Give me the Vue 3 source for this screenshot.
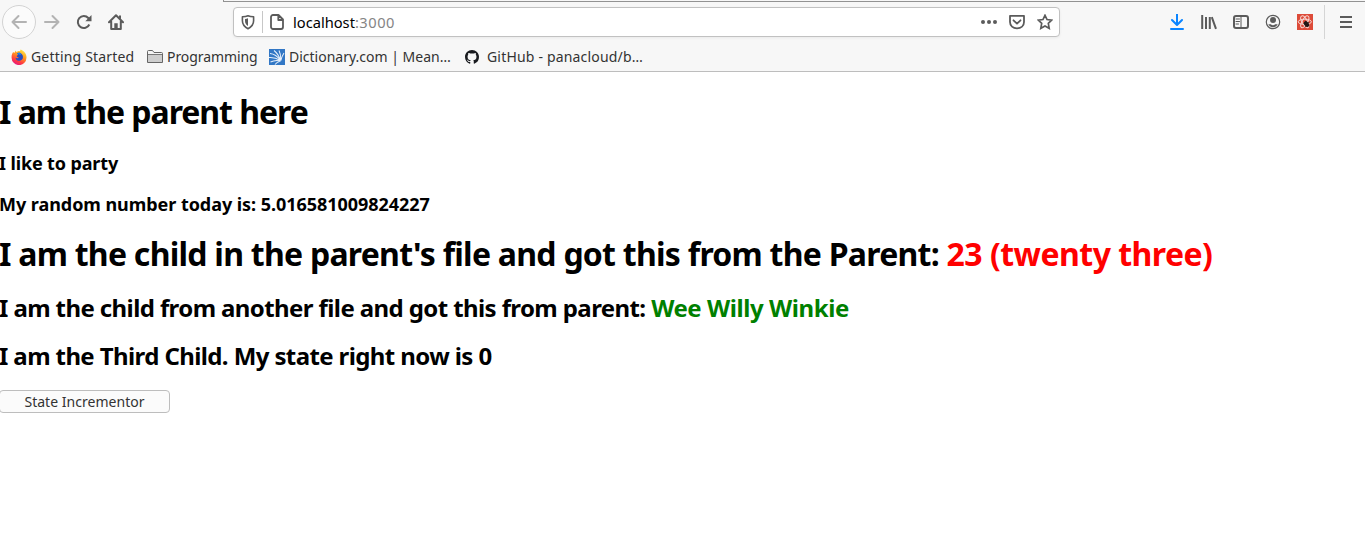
<script setup>
import { ref } from 'vue'

const count = ref(0)
const randomNumber = '5.016581009824227'
</script>

<template>
  <div class="window">
    <header class="chrome">
      <div class="tab-edge"></div>
      <div class="navbar">
        <div class="nav-buttons">
          <span class="back">
            <svg width="16" height="16" viewBox="0 0 16 16" class="line faded"><path d="M15 8H1.5M7.5 2 1.5 8l6 6" /></svg>
          </span>
          <svg width="16" height="16" viewBox="0 0 16 16" class="line faded fwd"><path d="M1 8h13.5M8.500 2l6 6-6 6" /></svg>
          <svg width="16" height="16" viewBox="0 0 16 16" class="line reload"><path d="M13.300 10.500A6 6 0 1 1 12.300 4L14 5.800" /><path class="solid" d="M15.500 1v6.200H9.300z" /></svg>
          <svg width="16" height="16" viewBox="0 0 16 16" class="line home"><path d="M1 8.300 8 1.300l7 7M3.200 7.500V15h9.600V7.500" /><path class="solid" d="M6.300 15V9.200h3.400V15zM11 1.500h2v4l-2-2z" /></svg>
        </div>
        <div class="urlbar">
          <svg width="14" height="16" viewBox="0 0 14 16" class="line shield"><path d="M7 1.800c-2 .9-3.800 1-5.600 1v4c0 4 1.800 6 5.600 8 3.800-2 5.600-4 5.600-8v-4c-1.800 0-3.600-.1-5.600-1z" /><path class="solid" d="M7 4.300v7.800c-2-1.300-3-2.800-3-5.300V5c1.100-.1 2-.3 3-.7z" /></svg>
          <i class="url-divider"></i>
          <svg width="14" height="16" viewBox="0 0 14 16" class="line page"><path d="M3 1h5.500L13 5.500V13a2 2 0 0 1-2 2H3a2 2 0 0 1-2-2V3a2 2 0 0 1 2-2zM8.300 1v5H13" /></svg>
          <span class="url">localhost<span class="port">:3000</span></span>
          <svg width="16" height="16" viewBox="0 0 16 16" class="dots"><circle cx="2" cy="8" r="2" /><circle cx="8" cy="8" r="2" /><circle cx="14" cy="8" r="2" /></svg>
          <svg width="16" height="16" viewBox="0 0 16 16" class="line pocket"><path d="M1 1.800h14V8c0 4-3 6.300-7 6.300S1 12 1 8z" /><path d="m4.500 6.300 3.500 3.300 3.500-3.300" /></svg>
          <svg width="16" height="16" viewBox="0 0 16 16" class="line star"><path d="m8 1.300 2.050 4.250 4.650.55-3.400 3.250.9 4.950L8 12l-4.200 2.300.9-4.950L1.300 6.100l4.650-.55z" /></svg>
        </div>
        <div class="tools">
          <svg width="14" height="16" viewBox="0 0 14 16" class="line download"><path d="M7 0v10.500M2 6l5 5 5-5M1 15h12" /></svg>
          <svg width="16" height="16" viewBox="0 0 16 16" class="line library"><path d="M1.200 1v14M5 3v12M8.800 3v12M10.800 3.200 15 14.800" /></svg>
          <svg width="16" height="16" viewBox="0 0 16 16" class="line sidebar"><rect x="1" y="2" width="14" height="12" rx="2" /><path class="thin" d="M8 2v12M3 5h3.500M3 7.500h3.500M3 10h2.500" /></svg>
          <svg width="16" height="16" viewBox="0 0 16 16" class="account"><circle cx="8" cy="8" r="6.700" fill="none" stroke="#5b5b5b" stroke-width="1.200" /><circle cx="8" cy="6" r="3" /><path d="M3.300 10.300h2.500c1.200 1.200 3.200 1.200 4.400 0h2.500C11.800 12.200 10 13.300 8 13.300s-3.800-1.100-4.700-3z" /></svg>
          <svg width="16" height="16" viewBox="0 0 16 16" class="react"><rect width="16" height="16" fill="#dd4b39" /><g fill="none" stroke="#f7d8d4" stroke-width="1"><ellipse cx="7.800" cy="7.800" rx="6.600" ry="2.600" /><ellipse cx="7.800" cy="7.800" rx="6.600" ry="2.600" transform="rotate(60 7.800 7.800)" /><ellipse cx="7.800" cy="7.800" rx="6.600" ry="2.600" transform="rotate(120 7.800 7.800)" /></g><ellipse cx="9.500" cy="10" rx="2.200" ry="3.200" transform="rotate(-35 9.500 10)" fill="#211817" /><path d="m6.500 9.500 6 2.500M8 13l4-5M8.500 7l2 6" stroke="#211817" stroke-width=".8" /></svg>
          <i class="tool-divider"></i>
          <svg width="12" height="16" viewBox="0 0 12 16" class="line menu"><path d="M0 3h12M0 8h12M0 13h12" /></svg>
        </div>
      </div>
      <nav class="bookmarks">
        <a class="bookmark b1">
          <svg width="16" height="16" viewBox="0 0 16 16">
            <defs><linearGradient id="fox" x1=".8" y1="0" x2=".3" y2="1"><stop offset="0" stop-color="#fff04a" /><stop offset=".4" stop-color="#ff9a1f" /><stop offset=".75" stop-color="#ff3b40" /><stop offset="1" stop-color="#e31587" /></linearGradient></defs>
            <path d="M2.200 3 3.300 4l1.500-2.400.7 1.700C6.500 2.200 8 1.900 9 2.200L9.500.500c3.500 1.300 6.300 4.400 6 8.300A7.400 7.400 0 0 1 .6 8.500C.5 6.300 1.200 4.300 2.200 3z" fill="url(#fox)" />
            <path d="M6 4.200c2.300-1.500 6 .3 6 3.800 0 2.700-2.200 4-4.200 3.800-2-.2-3.200-1.500-3.200-3 1.200.8 2.300.5 3.200-.4-1.200-.2-2-.6-2.200-1.500L7 5.800z" fill="#274cc0" />
            <path d="m6 4.200 2.500-.7c1.200.8 1.500 1.600 1.500 2.500L7.600 5.500z" fill="#1786ee" />
          </svg>
          <span>Getting Started</span>
        </a>
        <a class="bookmark b2">
          <svg width="16" height="16" viewBox="0 0 16 16"><path d="M.500 13.500v-11q0-1 1-1h4l1.500 2h7.500q1 0 1 1v9z" fill="#f4f4f4" stroke="#666" /><path d="M1 6h14v7H1z" fill="#cecece" /><path d="M1 5.500h14" stroke="#777" /></svg>
          <span>Programming</span>
        </a>
        <a class="bookmark b3">
          <svg width="16" height="16" viewBox="0 0 16 16"><path d="M0 0h16v16H0z" fill="#3277c5" /><path d="M1 4.500Q7 5 11.500 11.500M5 1.500q4.500 3.500 6.500 10M10 1.500q2 4 1.800 10M15 4q-2 3-3.200 7.500M0 8.500q6-.5 11.500 3M1.500 13q5-2.500 10-1M6 15.500q2-2.500 5.500-3.500" stroke="#e7f0fb" stroke-width="1.050" fill="none" /></svg>
          <span>Dictionary.com | Mean…</span>
        </a>
        <a class="bookmark b4">
          <svg width="14" height="14" viewBox="0 0 16 16"><path fill="#191b1f" fill-rule="evenodd" d="M8 0C3.580 0 0 3.580 0 8c0 3.540 2.290 6.530 5.470 7.590.4.070.55-.17.55-.38 0-.19-.01-.82-.01-1.490-2.010.37-2.530-.49-2.690-.94-.09-.23-.48-.94-.82-1.130-.28-.15-.68-.52-.01-.53.63-.01 1.080.58 1.230.82.72 1.210 1.870.87 2.330.66.070-.52.28-.87.51-1.070-1.780-.2-3.640-.89-3.640-3.950 0-.87.31-1.590.82-2.150-.08-.2-.36-1.020.08-2.120 0 0 .67-.21 2.200.82.64-.18 1.320-.27 2-.27s1.360.09 2 .27c1.530-1.040 2.200-.82 2.200-.82.44 1.100.16 1.920.08 2.120.51.56.82 1.270.82 2.150 0 3.070-1.870 3.750-3.650 3.950.29.25.54.73.54 1.480 0 1.070-.01 1.930-.01 2.200 0 .21.15.46.55.38A8.010 8.010 0 0 0 16 8c0-4.420-3.580-8-8-8z" /></svg>
          <span>GitHub - panacloud/b…</span>
        </a>
      </nav>
    </header>
    <main class="content">
      <h1 class="parent"><span>I am the parent here</span></h1>
      <h3 class="party"><span>I like to party</span></h3>
      <h3 class="random"><span>My random number today is: {{ randomNumber }}</span></h3>
      <h1 class="child"><span>I am the child in the parent's file and got this from the Parent: </span><span class="red">23 (twenty three)</span></h1>
      <h2 class="other"><span>I am the child from another file and got this from parent: </span><span class="green">Wee Willy Winkie</span></h2>
      <h2 class="third"><span>I am the Third Child. My state right now is {{ count }}</span></h2>
      <button @click="count++"><span>State Incrementor</span></button>
    </main>
  </div>
</template>

<style>
body { margin: 0; background: #fff; }
</style>

<style scoped>
.window { width: 1365px; height: 540px; overflow: hidden; font-family: "Noto Sans", "Open Sans", sans-serif; color: #000; }
.chrome { box-sizing: border-box; height: 72px; background: #f7f7f7; border-bottom: 1px solid #bdbdbd; }
.tab-edge { height: 2px; box-sizing: border-box; margin-left: 223px; border-left: 1px solid #929292; border-bottom: 1px solid #929292; }
svg { display: block; flex: none; fill: #5b5b5b; }
.line { fill: none; stroke: #5b5b5b; stroke-width: 2; stroke-linejoin: round; stroke-linecap: round; }
.solid { fill: #5b5b5b; stroke: none; }
.faded { stroke: #b3b3b3; }
.navbar { display: flex; height: 40px; align-items: center; }
.nav-buttons { display: flex; align-items: center; width: 233px; }
.back { display: grid; place-items: center; box-sizing: border-box; width: 34px; height: 34px; margin-left: 2px; border: 1px solid #d3d3d3; border-radius: 50%; background: #fbfbfb; }
.fwd { margin-left: 8px; }
.reload { margin-left: 16px; stroke-linecap: butt; }
.home { margin-left: 16px; }
.urlbar { box-sizing: border-box; display: flex; align-items: center; width: 827px; height: 30px; padding-left: 7px; border: 1px solid #c1c1c1; border-radius: 4px; background: #fff; box-shadow: 0 1px 3px rgba(0, 0, 0, .06); }
.shield { stroke-width: 1.600; }
.url-divider { width: 1px; height: 22px; margin: 0 7px; background: #c7c7c7; }
.page { stroke-width: 1.800; }
.url { flex: 1; margin-left: 9px; font-size: 14.670px; line-height: 20px; white-space: pre; }
.port { color: #858585; letter-spacing: .500px; }
.pocket { margin-left: 12px; stroke-width: 1.800; }
.star { margin: 0 6px 0 12px; stroke-width: 1.700; stroke-linejoin: miter; }
.tools { display: flex; align-items: center; margin-left: 110px; }
.download { stroke: #0a84ff; }
.library { margin-left: 17px; stroke-linecap: butt; }
.sidebar { margin-left: 16px; }
.thin { stroke-width: 1; }
.account, .react { margin-left: 16px; }
.tool-divider { width: 1px; height: 34px; margin: 0 15px 0 11px; background: #d5d5d5; }
.bookmarks { display: flex; align-items: center; height: 29px; padding-left: 11px; font-size: 14px; color: #333; }
.bookmark { display: flex; align-items: center; height: 20px; white-space: nowrap; }
.bookmark span { line-height: 20px; }
.b1 { width: 136px; gap: 4px; letter-spacing: .180px; }
.b2 { width: 122px; gap: 4px; letter-spacing: -.080px; }
.b3 { width: 196px; gap: 4px; }
.b4 { gap: 8px; letter-spacing: .180px; }
h1, h2, h3 { margin: 0; font-weight: 700; white-space: pre; }
h1 { font-size: 32px; line-height: 36px; }
h2 { font-size: 24px; line-height: 28px; }
h3 { font-size: 18px; line-height: 22px; }
.content { margin-left: -1px; }
.parent { margin-top: 22px; letter-spacing: -1.030px; }
.party { margin-top: 22px; letter-spacing: -.130px; }
.random { margin-top: 19px; letter-spacing: -.050px; }
.child { margin-top: 21px; letter-spacing: -.745px; }
.other { margin-top: 22px; letter-spacing: -.600px; }
.third { margin-top: 20px; letter-spacing: -.605px; }
.red { color: #f00; letter-spacing: -.530px; }
.green { color: #008000; letter-spacing: -.430px; }
button { box-sizing: border-box; display: grid; place-items: center; width: 171px; height: 23px; margin: 20px 0 0; padding: 0; border: 1px solid #bdbdbd; border-radius: 4px; background: #fbfbfb; color: #333; font: 14px/20px "Noto Sans", "Open Sans", sans-serif; letter-spacing: .030px; white-space: nowrap; }
</style>
